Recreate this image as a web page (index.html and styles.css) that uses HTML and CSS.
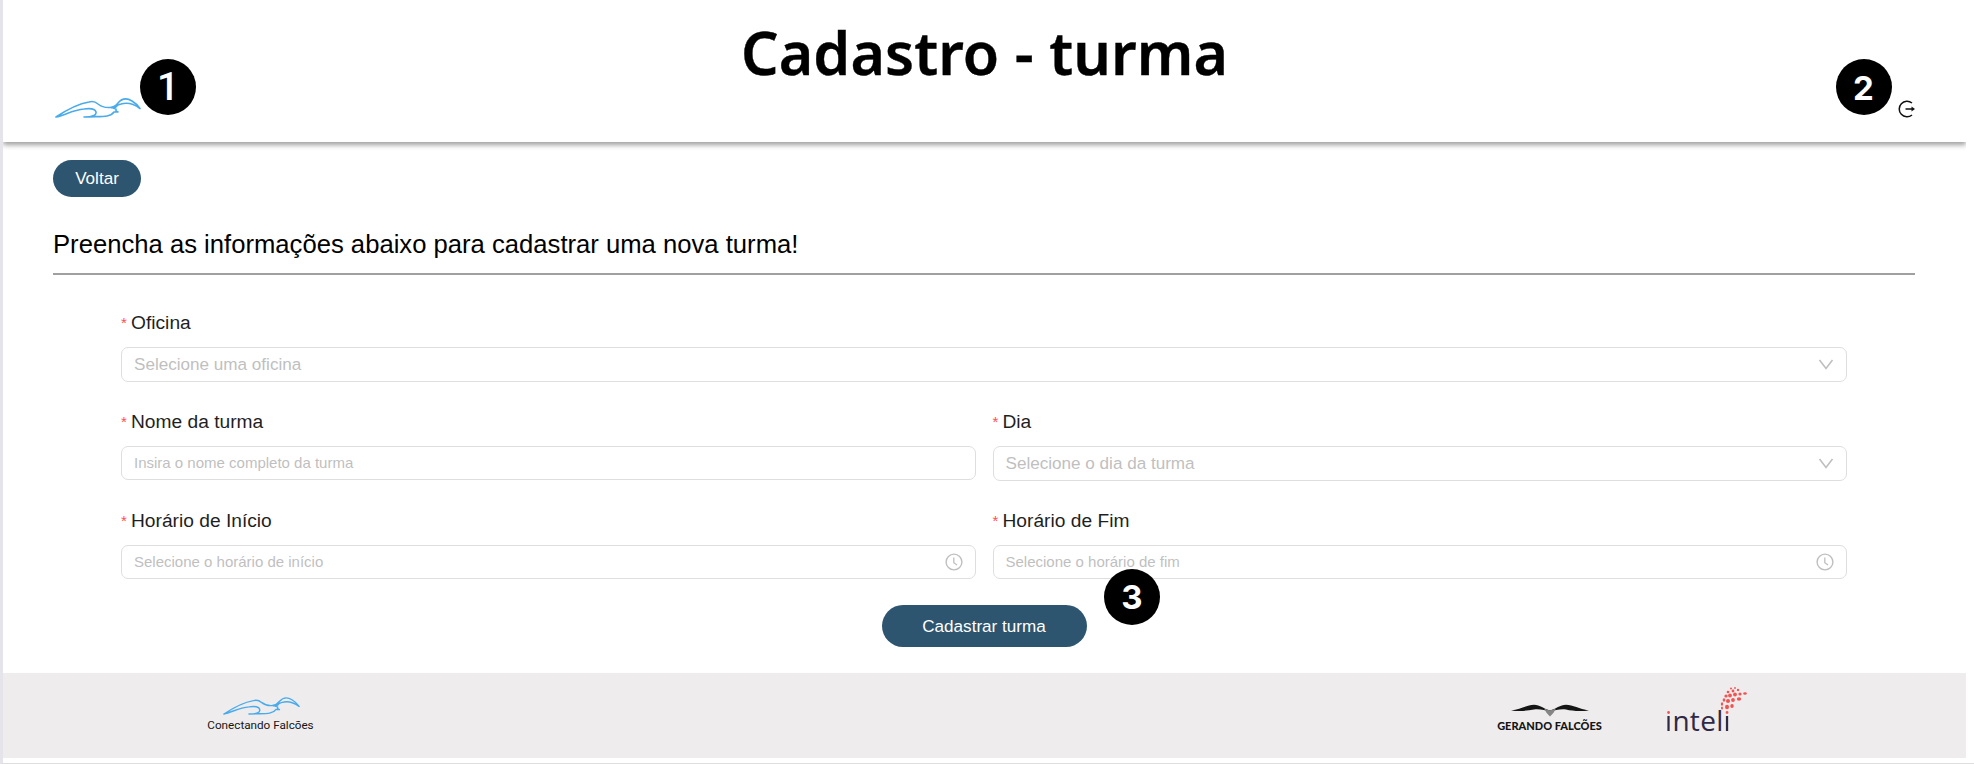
FILE: index.html
```html
<!DOCTYPE html>
<html lang="pt-BR">
<head>
<meta charset="utf-8">
<title>Cadastro - turma</title>
<link rel="stylesheet" href="styles.css">
</head>
<body>
<svg class="defs" width="0" height="0">
  <symbol id="falcon" viewBox="0 0 86 22">
    <path d="M1 20 C10 14 22 7 34 5 Q39 3.500 43 7 Q48 11 55 10.500 Q60 10 63 6 Q69 -1 77 4 Q82 7 85 11.500 C79 7 73 5 66 7 Q62 8 61 10 L58 11 L61 12 L61 14 L63 15 L59 15 C55 21 45 19 29 20 Q42 20 41 15 Q40 10.500 29 12 C18 13 10 18 1 20 Z M61 9 L56 11" fill="none" stroke="#4aabeb" stroke-width="1.600" stroke-linejoin="round"/>
  </symbol>
  <symbol id="chevron" viewBox="0 0 16 12"><path d="M1.500 1 L8 9.500 L14.500 1" fill="none" stroke="#bfbfbf" stroke-width="1.600"/></symbol>
  <symbol id="clock" viewBox="0 0 18 18"><circle cx="9" cy="9" r="7.900" fill="none" stroke="#bfbfbf" stroke-width="1.400"/><path d="M8.800 4.500 V9.700 L12 12" fill="none" stroke="#bfbfbf" stroke-width="1.300"/></symbol>
</svg>
<div class="page">
  <header class="header">
    <svg class="brand"><use href="#falcon"/></svg>
    <h1 class="title">Cadastro - turma</h1>
    <svg class="logout" viewBox="0 0 18 18"><path d="M14.500 3 A7.800 7.800 0 1 0 14.500 15 M8 9 H15" fill="none" stroke="#111" stroke-width="1.500"/><path d="M14 6.500 L17.500 9 L14 11.500Z" fill="#111"/></svg>
  </header>
  <main class="main">
    <button class="button back">Voltar</button>
    <h2 class="lead">Preencha as informações abaixo para cadastrar uma nova turma!</h2>
    <form class="form">
      <div class="field wide"><label class="label"><span class="req">*</span>Oficina</label><div class="control select">Selecione uma oficina<svg class="chevron"><use href="#chevron"/></svg></div></div>
      <div class="field"><label class="label"><span class="req">*</span>Nome da turma</label><div class="control">Insira o nome completo da turma</div></div>
      <div class="field"><label class="label"><span class="req">*</span>Dia</label><div class="control select">Selecione o dia da turma<svg class="chevron"><use href="#chevron"/></svg></div></div>
      <div class="field"><label class="label"><span class="req">*</span>Horário de Início</label><div class="control">Selecione o horário de início<svg class="clock"><use href="#clock"/></svg></div></div>
      <div class="field"><label class="label"><span class="req">*</span>Horário de Fim</label><div class="control">Selecione o horário de fim<svg class="clock"><use href="#clock"/></svg></div></div>
    </form>
    <button class="button submit">Cadastrar turma</button>
  </main>
  <footer class="footer">
    <div class="credit"><svg class="credit-bird"><use href="#falcon"/></svg><span>Conectando Falcões</span></div>
    <div class="partners">
      <div class="gerando">
        <svg class="wings" viewBox="0 0 80 13"><path d="M1 6.500 C11 5 17 1 24 .8 C30 1 34 5 40 6.500 C46 5 50 1 56 .8 C63 1 69 5 79 6.500 C70 7.500 62 7 56 5.500 C50 4.500 45 7 40 7 C35 7 30 4.500 24 5.500 C17 7 9 7.500 1 6.500Z" fill="#151515"/><path d="M34 4.500 L40 6.500 L46 4.500 Q44 9 40 12.500 Q36 9 34 4.500Z" fill="#858585"/></svg>
        <span>GERANDO FALCÕES</span>
      </div>
      <div class="inteli"><span><b>i</b>ntel<b>i</b></span>
        <svg class="inteli-dots" viewBox="0 0 82 54"><g fill="#f25250"><ellipse cx="57" cy="18" rx="1.200" ry="1.700"/><ellipse cx="57" cy="22" rx="1" ry="1.500"/><ellipse cx="62" cy="21" rx="2" ry="2.200"/><ellipse cx="67" cy="20" rx="1.700" ry="2"/><ellipse cx="59" cy="14" rx="1.300" ry="1.800"/><ellipse cx="63" cy="15" rx="2" ry="2"/><ellipse cx="68" cy="14" rx="1.900" ry="2"/><ellipse cx="74" cy="13" rx="2.200" ry="1.800"/><circle cx="61" cy="10" r="1.600"/><circle cx="65" cy="9.500" r="1.900"/><circle cx="70" cy="8.500" r="1.900"/><circle cx="75" cy="8" r="1.600"/><ellipse cx="80" cy="7.500" rx="1.800" ry="1.300"/><circle cx="63" cy="6" r="1.300"/><circle cx="68" cy="5" r="1.400"/><circle cx="73" cy="4" r="1.200"/><circle cx="66" cy="2.500" r="1"/><circle cx="70" cy="2" r=".9"/></g></svg>
      </div>
    </div>
  </footer>
  <span class="badge b1">1</span><span class="badge b2">2</span><span class="badge b3">3</span>
</div>
</body>
</html>
```

FILE: styles.css
```css
* { box-sizing: border-box; }
body { margin: 0; background: #fff; font-family: "Liberation Sans", Arial, sans-serif; }
.defs { position: absolute; }
.page { position: relative; height: 764px; padding-right: 8px; overflow: hidden; border-left: 3px solid #e4e4ea; border-bottom: 1px solid #dedede; }
.header { display: flex; justify-content: space-between; align-items: flex-start; height: 142px; padding: 0 50px 0 52px; box-shadow: 0 3px 5px rgba(0, 0, 0, .38); clip-path: inset(0 0 -12px 0); }
.brand { width: 86px; height: 22px; margin-top: 97px; }
.title { margin: 11px 0 0 -69px; font: 600 59px/82px "Noto Sans", sans-serif; letter-spacing: .1px; white-space: nowrap; color: #000; -webkit-text-stroke: .4px #000; }
.logout { width: 19px; height: 18px; margin-top: 100px; }
.main { display: flex; flex-direction: column; align-items: center; height: 531px; padding: 18px 51px 0 50px; }
.button { border: 0; border-radius: 22px; background: #2d556f; color: #fff; font: 17.1px "Liberation Sans", Arial, sans-serif; padding: 0; }
.back { align-self: flex-start; width: 88px; height: 37px; }
.lead { align-self: stretch; height: 78px; margin: 0; padding-top: 32px; border-bottom: 2px solid #a0a0a0; font-size: 25.650px; line-height: 30px; font-weight: 400; color: #000; }
.form { align-self: stretch; display: grid; grid-template-columns: 1fr 1fr; column-gap: 17px; padding: 33px 68px 0 68px; }
.field { height: 99px; }
.wide { grid-column: 1 / -1; }
.label { display: flex; align-items: center; height: 31px; padding-bottom: 1px; font-size: 19.2px; color: #1f1f1f; }
.req { width: 10px; font-size: 15px; color: #ff4d4f; line-height: 16px; }
.control { display: flex; align-items: center; justify-content: space-between; height: 34px; margin-top: 8px; padding: 0 12px 1px; border: 1px solid #dedede; border-radius: 7px; font-size: 15px; color: #bfbfbf; }
.select { height: 35px; font-size: 17.1px; padding-bottom: 0; }
.chevron { width: 16px; height: 12px; }
.clock { width: 18px; height: 18px; }
.submit { width: 205px; height: 42px; padding-top: 1px; }
.footer { display: flex; justify-content: space-between; height: 85px; padding: 0 219px 0 204px; background: #eeeced; }
.credit { display: flex; flex-direction: column; align-items: center; width: 107px; padding-top: 23px; font: 11.700px/14px Roboto, sans-serif; color: #151515; white-space: nowrap; }
.credit-bird { width: 77px; height: 20px; margin: 0 0 2px 2px; }
.partners { display: flex; gap: 63px; }
.gerando { display: flex; flex-direction: column; align-items: center; width: 105px; padding-top: 31px; font: 900 11px/13px Lato, sans-serif; color: #151515; white-space: nowrap; }
.wings { width: 80px; height: 13px; margin-bottom: 2px; }
.inteli { position: relative; width: 82px; padding-top: 29px; font: 400 28px/36px "Open Sans", sans-serif; letter-spacing: .3px; color: #2e2945; }
.inteli b { font-weight: 400; background: linear-gradient(#f25250 0 14px, #2e2945 14px); -webkit-background-clip: text; background-clip: text; color: transparent; }
.inteli-dots { position: absolute; left: 0; top: 13px; width: 82px; height: 54px; }
.badge { position: absolute; display: flex; align-items: center; justify-content: center; width: 56px; height: 56px; border-radius: 50%; background: #000; color: #fff; font: 700 33px Inter, sans-serif; }
.b1 { left: 137px; top: 59px; font: 500 39px Roboto, sans-serif; }
.b2 { left: 1832.500px; top: 59px; padding-top: 1px; }
.b3 { left: 1101px; top: 569px; }
```
